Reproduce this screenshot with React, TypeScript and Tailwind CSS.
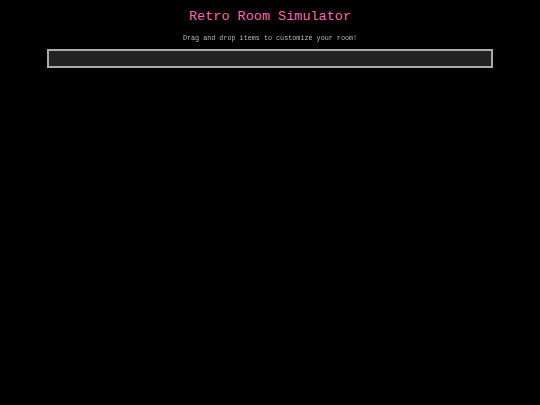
export default function App() {
  return (
    <div className="min-h-[405px] w-full bg-black font-['Courier_New',Courier,monospace] text-center">
      <div className="pt-[9px]">
        <h1 className="text-[13.5px] leading-[16px] font-normal text-[#ff69b4]">Retro Room Simulator</h1>
        <p className="mt-[9px] text-[6.75px] leading-[8px] text-[#bbbbbb] will-change-transform">Drag and drop items to customize your room!</p>
      </div>
      <div className="mx-[47px] mt-[7px] h-[19px] border-2 border-[#aaaaaa] bg-[#222222]"></div>
    </div>
  );
}
